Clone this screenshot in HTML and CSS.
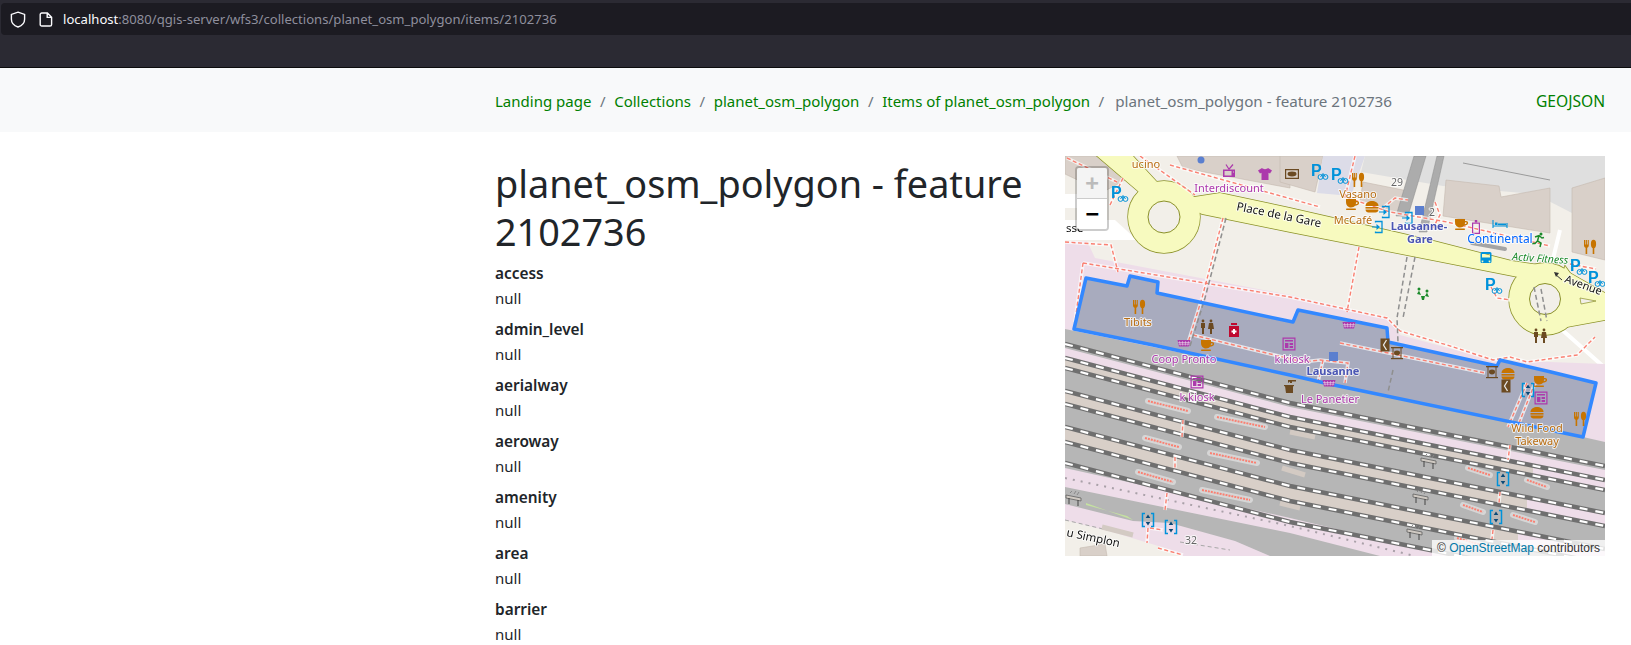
FILE: index.html
```html
<!doctype html>
<html lang="en">
<head>
    <meta charset="UTF-8">
    <title>planet_osm_polygon - feature 2102736</title>
    <link rel="stylesheet" href="styles.css">
</head>
<body>
<header class="browser">
    <div class="urlbar">
        <svg class="shield" width="16" height="17" viewBox="0 0 16 17"><path d="M8 1.2 14.6 3.4V8.2C14.6 12 11.6 14.8 8 16 4.4 14.8 1.4 12 1.4 8.2V3.4Z"/></svg>
        <svg class="pageicon" width="14" height="15" viewBox="0 0 14 15"><path d="M2.8 1H8.4L12.6 5.2V12.4A1.6 1.6 0 0 1 11 14H2.8A1.6 1.6 0 0 1 1.2 12.4V2.6A1.6 1.6 0 0 1 2.8 1ZM8.2 1V5.4H12.6"/></svg>
        <span class="url"><b>localhost</b>:8080/qgis-server/wfs3/collections/planet_osm_polygon/items/2102736</span>
    </div>
</header>

<nav class="crumbs">
    <ol>
        <li><a href="#">Landing page</a></li>
        <li><a href="#">Collections</a></li>
        <li><a href="#">planet_osm_polygon</a></li>
        <li><a href="#">Items of planet_osm_polygon</a></li>
        <li class="current">planet_osm_polygon - feature 2102736</li>
    </ol>
    <a class="format" href="#">GEOJSON</a>
</nav>

<main class="content">
    <section class="props">
        <h1>planet_osm_polygon - feature 2102736</h1>
        <dl>
            <dt>access</dt><dd>null</dd>
            <dt>admin_level</dt><dd>null</dd>
            <dt>aerialway</dt><dd>null</dd>
            <dt>aeroway</dt><dd>null</dd>
            <dt>amenity</dt><dd>null</dd>
            <dt>area</dt><dd>null</dd>
            <dt>barrier</dt><dd>null</dd>
        </dl>
    </section>

    <div class="map">
        <svg class="tiles" width="540" height="400" viewBox="0 0 540 400">
            <defs>
                <g id="i-fork"><path d="M-6-7v5.5c0 1 .8 2 1.6 2.2V7h1.6V.7C-2 .5-1.200-.5-1.200-1.500V-7h-1v4.500h-.7V-7h-1v4.500h-.7V-7z"/><ellipse cx="3.500" cy="-3" rx="2.600" ry="4.200"/><rect x="2.700" y="0" width="1.600" height="7"/></g>
                <g id="i-cup"><path d="M-6-5H4V-3C6.500-3.500 7.500-2 7-.5 6.500 1 5 1.500 3 1.800 2 3 1 3.500-1 3.500-4 3.500-6 1-6-2ZM4-1.600 3.800.3C5 0 5.800-.5 5.700-1.200 5.600-2 4.800-2 4-1.600Z"/><rect x="-6" y="4.500" width="10" height="1.500" rx=".7"/></g>
                <g id="i-burger"><path d="M-6.500-1C-6.500-4.500-3-6 0-6S6.500-4.500 6.500-1Z"/><rect x="-6.500" y="0" width="13" height="1.600"/><path d="M-6.500 2.600H6.500C6.500 4.500 5 5.500 3.500 5.500H-3.500C-5 5.500-6.500 4.500-6.500 2.600Z"/></g>
                <g id="i-tv"><path d="M-6-2.500H6V5H-6ZM-4.500-1V3.500H2.500V-1ZM4-.5h1v1H4Z" fill-rule="evenodd"/><path d="M-3-7.500 0-2.800 4-7.500" fill="none" stroke="currentColor" stroke-width="1.200"/></g>
                <g id="i-shirt"><path d="M-3-6-7-3.500-5-.5-3.500-1.300V6H3.500V-1.300L5-.5 7-3.500 3-6C2-4.500-2-4.500-3-6Z"/></g>
                <g id="i-money"><path d="M-7-5H7V5H-7ZM-5.800-3.800V3.800H5.800V-3.800Z" fill-rule="evenodd"/><ellipse cx="0" cy="0" rx="4.500" ry="2.400"/></g>
                <g id="i-bus"><path d="M-4-6H4A1.500 1.500 0 0 1 5.500-4.500V3.500A1.500 1.500 0 0 1 4 5H-4A1.500 1.500 0 0 1-5.500 3.500V-4.500A1.500 1.500 0 0 1-4-6ZM-4-4V-.5H4V-4ZM-3.500 2.500a.9.9 0 1 0 .01 0ZM3.500 2.500a.9.9 0 1 0 .01 0Z" fill-rule="evenodd"/></g>
                <g id="i-bike"><text class="pmark" x="-7" y="3">P</text><circle cx="2.500" cy="4" r="2.400" fill="none" stroke="currentColor" stroke-width="1"/><circle cx="7.500" cy="4" r="2.400" fill="none" stroke="currentColor" stroke-width="1"/><path d="M2.500 4 5 .5 7.500 4" fill="none" stroke="currentColor"/></g>
                <g id="i-lift"><path d="M-3-6.500H-5.500V6.500H-3M3-6.500H5.500V6.500H3" fill="none" stroke="currentColor" stroke-width="1.500"/><path d="M0-5.500 2.300-2H-2.300ZM0 5.500 2.300 2H-2.300Z" fill="#0a4a78"/></g>
                <g id="i-door"><path d="M-1.500-4.500V-5.500H5V5.500H-1.500V4.500" fill="none" stroke="currentColor" stroke-width="1.300"/><path d="M-5-.6H-.5V-3L3 0-.5 3V.6H-5Z"/></g>
                <g id="i-kiosk"><path d="M-6.500-6.500H6.500V6.500H-6.500ZM-5.300-5.300V5.300H5.300V-5.300Z" fill-rule="evenodd"/><path d="M-4-4H4V-2.500H-4ZM-4-1H-.6V4H-4ZM.6-1H4V1H.6ZM.6 2H4V4H.6Z"/></g>
                <g id="i-kbox"><rect x="-4.500" y="-6.500" width="9" height="13"/><path d="M1.500-5-1.500 0 1.500 5" fill="none" stroke="#e8e8e8" stroke-width="1.300"/></g>
                <g id="i-cmach"><rect x="-6" y="-6" width="12" height="1.300"/><rect x="-4.500" y="-5" width="1" height="11"/><rect x="3.500" y="-5" width="1" height="11"/><ellipse cx="0" cy="0" rx="3" ry="2.400"/><rect x="-6" y="5" width="12" height="1.200"/></g>
                <g id="i-canopy"><path d="M-8-2 7 1V4L-8 1Z" fill="#cfc9c2" stroke="#555" stroke-width=".7"/><path d="M-5 1V7M4 3V9" stroke="#444" stroke-width="1"/><path d="M-4-4-2-6M0-3 2-6M3-2 5-5" stroke="#888" stroke-width="1"/></g>
                <g id="i-basket"><path d="M-6.500-3H6.500L5 3.500H-5Z"/><path d="M-4.500-1.800-3.800 2.500M-1.500-1.800-1.300 2.500M1.500-1.800 1.300 2.500M4.500-1.800 3.800 2.500M-5.800-.5H5.800M-5.300 1.200H5.300" stroke="#e8d8ea" stroke-width=".6"/></g>
                <g id="i-wc"><circle cx="-4" cy="-6" r="1.400"/><path d="M-6-4H-2V1H-3V7H-5V1H-6Z"/><circle cx="4" cy="-6" r="1.400"/><path d="M2-4H6L7 2H5V7H3V2H1Z"/></g>
                <g id="i-pharm"><path d="M-3-7H3V-5H-3ZM-5-4H5V7H-5Z"/><path d="M-1 -1H1V.5H2.500V2.500H1V4H-1V2.500H-2.500V.5H-1Z" fill="#fff"/></g>
                <g id="i-runner"><circle cx="3" cy="-6" r="1.500"/><path d="M-3-3 1-4.500 4-2 6-2.500M1-4.500-.5 1 3 3 2 7M-.5 1-3 3.500H-6" fill="none" stroke="currentColor" stroke-width="1.500"/></g>
                <g id="i-seesaw"><circle cx="-4" cy="-5" r="1.500"/><circle cx="4" cy="-3" r="1.500"/><path d="M-6 0-4-3.500-2 1ZM2 2 4-1.500 6 3Z"/><path d="M-2 2H2L1 6H-1Z"/></g>
                <g id="i-bed"><path d="M-7-4V4M7-1V4M-7 2H7" fill="none" stroke="currentColor" stroke-width="1.100"/><path d="M-5-1.500H-2.500V1H-5ZM-2-.5H6V1H-2Z"/></g>
                <g id="i-phone"><path d="M-4-4.500H4V7H-4ZM-2.800-3.300V5.800H2.800V-3.300Z" fill-rule="evenodd"/><rect x="-1.200" y="-7" width="2.400" height="2.500"/></g>
                <g id="i-tap"><path d="M-2-7H6V-5.500H2V-4H0V-5.500L-2-4Z"/><path d="M-5-1H3V6H-4Z"/><rect x="-6" y="-2" width="10" height="1.200"/></g>

                <g id="roads">
                    <circle cx="99" cy="61" r="36"/>
                    <circle cx="480" cy="143" r="36"/>
                    <path d="M32 0H68L92 26 74 36Z"/>
                    <path d="M129 41 155 37 225 52 365 84 447 105 482 110V130L453 121 225 76 137 58 120 50Z"/>
                    <path d="M500 110 505 117 540 137V164L502 171 490 150Z"/>
                </g>

                <g id="feet">
                    <path d="M0 86 46 89 53 116M2 2 52 26M45 49 58 22M75 0 130 39M105 9 255 51M290 0 280 41 325 56 382 66 485 90"/>
                    <path d="M318 52 330 42 343 44M370 46 375 59 368 72M18 107 225 141 322 162 335 175 382 189 428 204 445 201 462 206 512 199 530 181M18 107 10 166"/>
                    <path d="M158 62 137 142 122 190M294 91 282 156M275 187 420 217M462 227 443 271M470 227 452 272M128 179 238 206 255 204 283 207 280 227M258 204 253 226"/>
                    <path d="M118 264 117 281M110 301 110 312M102 337 100 354M445 289 443 304M435 336 434 347M428 374 427 383M83 372 82 387M85 372 98 374M93 392 118 399M426 131 432 142 445 144M505 108 531 113"/>
                </g>
            </defs>

            <rect class="land" width="540" height="400"/>

            <!-- buildings, top of the map -->
            <path class="bld" d="M112 0H225V32L118 12Z"/>
            <path class="bld" d="M0 0H32L60 24 38 36 0 18Z"/>
            <path class="bld" d="M215 0H258L250 36 215 26Z"/>
            <path class="bld-lav" d="M258 0H300L286 40 252 37Z"/>
            <path class="bld-grey" d="M300 0H540V74L470 38 378 30 296 16Z"/>
            <path class="bld" d="M298 26 348 36 342 62 295 45Z"/>
            <path class="bld" d="M381 24 434 30 436 41 485 32V77L378 60Z"/>
            <path class="bld" d="M507 74V32L540 22V104L507 96Z"/>
            <path class="canopy" d="M349 0H361L343 60H331ZM372 0H379L362 76H354Z"/>
            <path class="canopy-line" d="M407 87 440 93"/>
            <path class="bld-grey-line" d="M398 7 485 24"/>
            <path class="white" d="M0 38H12V52H0ZM0 64H50L72 84H0Z"/>
            <path class="white-line" d="M487 107 495 74M495 172 540 212"/>

            <!-- station floor and tracks -->
            <path class="pink" d="M0 85H22L30 102 225 139 322 162 335 179 428 204 540 208V400H0Z"/>
            <path class="grey" d="M0 173 225 219 518 281 540 286V400H0Z"/>
            <path class="pink" d="M0 192 225 251 540 314V324L225 261 0 202Z"/>
            <path class="beige" d="M0 202 225 261 468 310V320L225 271 0 212Z"/>
            <path class="pink" d="M468 310 540 324V334L468 320Z"/>
            <path class="beige" d="M0 235 225 294 462 341V354L225 307 0 248Z"/>
            <path class="pink" d="M462 341 540 357V370L462 354Z"/>
            <path class="beige" d="M0 271 225 330 453 376V391L225 345 0 286Z"/>
            <path class="pink" d="M453 376 540 393V400H490L453 391Z"/>
            <path class="pink" d="M0 312 225 362 385 400H315L225 377 0 331Z"/>
            <path class="pink" d="M0 348 68 365 105 367 170 385 205 400H0Z"/>
            <path class="green" d="M21 347 68 364 62 360 21 349Z"/>
            <path class="land" d="M0 364 47 376 100 392 118 400H0Z"/>
            <path class="bld" d="M15 392 40 388 42 400H15Z"/>
            <path class="dots" d="M0 322 225 370 350 400"/>
            <path class="walk" d="M0 364 68 380M115 386 165 394"/>

            <g class="platforms">
                <path d="M83 245 123 255M152 261 200 271M80 282 114 291M145 297 192 307M73 316 108 326M137 334 185 344M403 312 425 319M462 324 482 331M398 349 418 356M448 359 470 366M392 382 420 390"/>
                <path class="plat-red" d="M83 245 123 255M152 261 200 271M80 282 114 291M145 297 192 307M73 316 108 326M137 334 185 344M403 312 425 319M462 324 482 331M398 349 418 356M448 359 470 366M392 382 420 390"/>
                <path class="plat-plain" d="M225 276 250 281M217 312 240 319M215 347 235 352M37 371 68 379"/>
            </g>

            <g class="rail-base">
                <path d="M0 188 225 247 540 310"/><path d="M0 202 225 261 540 324"/><path d="M0 212 225 271 540 334"/><path d="M0 235 225 294 540 357"/>
                <path d="M0 248 225 307 540 370"/><path d="M0 271 225 330 540 393"/><path d="M0 286 225 345 540 408"/><path d="M0 307 225 366 540 429"/>
            </g>
            <g class="rail-dash">
                <path d="M0 188 225 247 540 310"/><path d="M0 202 225 261 540 324"/><path d="M0 212 225 271 540 334"/><path d="M0 235 225 294 540 357"/>
                <path d="M0 248 225 307 540 370"/><path d="M0 271 225 330 540 393"/><path d="M0 286 225 345 540 408"/><path d="M0 307 225 366 540 429"/>
            </g>

            <!-- feature fill sits above the tile -->
            <path class="feature-fill" d="M9 173 21 122 62 130 65 120 93 126 92 137 228 166 233 154 322 172 323 186 432 210 435 204 486 216 531 227 518 281 264 228 225 219 88 189Z"/>

            <use class="road-case" href="#roads"/>
            <use class="road-fill" href="#roads"/>
            <circle class="hole" cx="99" cy="61" r="16"/>
            <circle class="hole" cx="480" cy="143" r="15.500"/>
            <path class="island" d="M515 142 531 145 516 148Z"/>

            <use class="foot-case" href="#feet"/>
            <use class="foot" href="#feet"/>
            <path class="rail-sub" d="M342 101 332 162 333 186M350 101 338 162M328 214 323 236M469 131 476 165M476 133 482 165M161 62 140 142 125 190"/>
            <path class="arrow" d="M490 118 497 124"/>
            <path class="arrowhead" d="M489 116 494 117 491 121Z"/>

            <path class="feature" d="M9 173 21 122 62 130 65 120 93 126 92 137 228 166 233 154 322 172 323 186 432 210 435 204 486 216 531 227 518 281 264 228 225 219 88 189Z"/>

            <g class="ic-amenity">
                <use href="#i-fork" x="74" y="151"/><use href="#i-fork" x="293" y="24"/><use href="#i-fork" x="525" y="91"/><use href="#i-fork" x="515" y="263"/>
                <use href="#i-cup" x="287" y="48"/><use href="#i-cup" x="396" y="68"/><use href="#i-cup" x="142" y="189"/><use href="#i-cup" x="475" y="225"/>
                <use href="#i-burger" x="307" y="51"/><use href="#i-burger" x="443" y="218"/><use href="#i-burger" x="472" y="257"/>
            </g>
            <g class="ic-shop">
                <use href="#i-tv" x="164" y="16"/><use href="#i-shirt" x="200" y="18"/><use href="#i-kiosk" x="132" y="226"/><use href="#i-kiosk" x="224" y="188"/><use href="#i-kiosk" x="476" y="242"/>
                <use href="#i-basket" x="119" y="187"/><use href="#i-basket" x="284" y="169"/><use href="#i-basket" x="264" y="227"/><use href="#i-phone" x="411" y="71"/>
            </g>
            <g class="ic-dark">
                <use href="#i-money" x="227" y="18"/><use href="#i-kbox" x="320" y="189"/><use href="#i-kbox" x="441" y="230"/><use href="#i-cmach" x="332" y="197"/><use href="#i-cmach" x="427" y="216"/><use href="#i-wc" x="142" y="171"/><use href="#i-wc" x="475" y="180"/><use href="#i-tap" x="225" y="231"/>
            </g>
            <g class="ic-blue">
                <use href="#i-bike" x="53" y="39"/><use href="#i-bike" x="253" y="17"/><use href="#i-bike" x="273" y="21"/><use href="#i-bike" x="427" y="131"/><use href="#i-bike" x="512" y="112"/><use href="#i-bike" x="530" y="124"/>
                <use href="#i-door" x="319" y="56"/><use href="#i-door" x="342" y="62"/><use href="#i-door" x="312" y="71"/><use href="#i-bus" x="421" y="102"/><use href="#i-bed" x="435" y="68"/>
                <use href="#i-lift" x="438" y="323"/><use href="#i-lift" x="431" y="361"/><use href="#i-lift" x="83" y="364"/><use href="#i-lift" x="106" y="371"/><use href="#i-lift" x="463" y="234"/>
            </g>
            <use class="ic-green" href="#i-runner" x="473" y="84"/>
            <use class="ic-green" href="#i-seesaw" x="358" y="138"/>
            <use class="ic-red" href="#i-pharm" x="169" y="174"/>
            <use href="#i-canopy" x="364" y="304"/><use href="#i-canopy" x="356" y="340"/><use href="#i-canopy" x="350" y="375"/><use href="#i-canopy" x="9" y="341"/>
            <rect class="stn" x="350" y="50" width="9" height="9"/>
            <rect class="stn" x="264" y="196" width="9" height="9"/>
            <circle class="stn" cx="136" cy="4" r="3.500"/>

            <text class="lb lb-road" transform="translate(171 54) rotate(11.500)">Place de la Gare</text>
            <text class="lb lb-road lb-ave" transform="translate(499 126) rotate(20)">Avenue</text>
            <text class="lb lb-road" x="1" y="76">sse</text>
            <text class="lb lb-road" transform="translate(1 380) rotate(12)">u Simplon</text>
            <text class="lb lb-shop lb-mid" x="164" y="36">Interdiscount</text>
            <text class="lb lb-shop lb-mid" x="119" y="207">Coop Pronto</text>
            <text class="lb lb-shop lb-mid" x="132" y="245">k kiosk</text>
            <text class="lb lb-shop lb-mid" x="227" y="207">k kiosk</text>
            <text class="lb lb-shop lb-mid" x="265" y="247">Le Panetier</text>
            <text class="lb lb-food lb-mid" x="73" y="170">Tibits</text>
            <text class="lb lb-food lb-mid" x="293" y="42">Vasano</text>
            <text class="lb lb-food lb-mid" x="288" y="68">McCafé</text>
            <text class="lb lb-food lb-mid" x="472" y="276">Wild Food</text>
            <text class="lb lb-food lb-mid" x="472" y="289">Takeway</text>
            <text class="lb lb-food lb-mid" x="81" y="12">ucino</text>
            <text class="lb lb-hotel lb-mid" x="435" y="87">Continental</text>
            <text class="lb lb-gym" transform="translate(447 104) rotate(4)">Activ Fitness</text>
            <text class="lb lb-stn lb-mid" x="354" y="74">Lausanne-</text>
            <text class="lb lb-stn lb-mid" x="355" y="87">Gare</text>
            <text class="lb lb-stn lb-mid" x="268" y="219">Lausanne</text>
            <text class="lb lb-num lb-mid" x="332" y="30">29</text>
            <text class="lb lb-num lb-mid" x="367" y="60">2</text>
            <text class="lb lb-num lb-mid" x="126" y="388">32</text>
        </svg>

        <div class="zoom">
            <a class="zoom-in" href="#">+</a>
            <a class="zoom-out" href="#">−</a>
        </div>
        <div class="attribution">© <a href="#">OpenStreetMap</a> contributors</div>
    </div>
</main>
</body>
</html>
```

FILE: styles.css
```css
* {
    margin: 0;
    padding: 0;
    box-sizing: border-box;
}
html, body {
    height: 645px;
    overflow: hidden;
}
body {
    background: #fff;
    color: #212529;
    font-family: "Noto Sans", "Open Sans", sans-serif;
    font-size: 15px;
    line-height: 24px;
}
a {
    text-decoration: none;
}

/* browser toolbar */
.browser {
    height: 68px;
    padding: 3px 0 0 1px;
    background: #2b2a33;
    border-bottom: 1px solid #0c0c0d;
}
.urlbar {
    height: 32px;
    display: flex;
    align-items: center;
    background: #1c1b22;
    border-radius: 4px 0 0 4px;
    padding-left: 9px;
}
.shield path, .pageicon path {
    fill: none;
    stroke: #fbfbfe;
    stroke-width: 1.4;
}
.pageicon {
    margin-left: 13px;
}
.url {
    margin-left: 10px;
    color: #8f8f9d;
    font-size: 13.1px;
}
.url b {
    color: #fbfbfe;
    font-weight: 400;
}

/* breadcrumb */
.crumbs {
    height: 64px;
    display: flex;
    align-items: center;
    justify-content: space-between;
    padding: 1px 26px 0 495px;
    background: #f8f9fa;
}
.crumbs ol {
    display: flex;
    list-style: none;
}
.crumbs a {
    color: #008000;
}
.crumbs li + li::before {
    content: "/";
    color: #6c757d;
    padding: 0 8.6px;
}
.crumbs li.current {
    color: #6c757d;
    font-size: 15.2px;
}
.crumbs li.current::before {
    padding-right: 11px;
}
.crumbs .format {
    font-size: 15.6px;
}

/* page body */
.content {
    display: flex;
    gap: 15px;
    padding: 24px 26px 0 495px;
}
.props {
    flex: 1;
    padding-top: 4px;
}
h1 {
    font-size: 37.8px;
    line-height: 48px;
    font-weight: 400;
    margin-bottom: 6px;
}
dt {
    font-weight: 600;
    font-size: 15.4px;
}
dd {
    margin-bottom: 8px;
}

/* map */
.map {
    position: relative;
    width: 540px;
    height: 400px;
    flex: none;
    overflow: hidden;
    background: #f2efe9;
}
.tiles {
    display: block;
    filter: blur(.35px);
}
.land { fill: #f2efe9; }
.bld { fill: #d9d0c9; stroke: #c4b9ae; stroke-width: .6; }
.bld-lav { fill: #dcdce8; }
.bld-grey { fill: #dfdfdf; }
.bld-grey-line { fill: none; stroke: #9a9a9a; }
.canopy { fill: #acacac; stroke: #8c8c8c; stroke-width: .5; }
.canopy-line { fill: none; stroke: #a4a4a4; stroke-width: 4; stroke-linecap: round; }
.white { fill: #fff; }
.white-line { fill: none; stroke: #fff; stroke-width: 4; }
.pink { fill: #eedde9; }
.grey { fill: #b6b6b6; }
.beige { fill: #d8cfc8; }
.green { fill: #c5e2a0; }
.dots { fill: none; stroke: #a9a0a8; stroke-width: 2; stroke-dasharray: 2 6; }
.walk { fill: none; stroke: #a8a8a8; stroke-width: 1; stroke-dasharray: 4 3; }

.platforms path { fill: none; stroke: #d6d6d6; stroke-width: 6; stroke-linecap: round; }
.platforms .plat-red { stroke: #fa8072; stroke-width: 2; stroke-dasharray: 2 1; stroke-linecap: butt; }
.platforms .plat-plain { stroke: #d3cac3; stroke-width: 5; stroke-linecap: butt; }

.rail-base path { fill: none; stroke: #6f6f6f; stroke-width: 4.5; }
.rail-dash path { fill: none; stroke: #fff; stroke-width: 2.2; stroke-dasharray: 8 8; }
.rail-sub { fill: none; stroke: #8f8f8f; stroke-width: 1.500; stroke-dasharray: 5 3; }

.road-case { fill: #8b9128; stroke: #8b9128; stroke-width: 1.400; }
.road-fill { fill: #f7fabf; }
.hole { fill: #f2efe9; stroke: #8b9128; stroke-width: 1; }
.island { fill: #f2efe9; stroke: #8b9128; stroke-width: .7; }
.foot-case { fill: none; stroke: #fff; stroke-width: 3.500; opacity: .7; }
.foot { fill: none; stroke: #fa8072; stroke-width: 1.400; stroke-dasharray: 4 2.500; }
.arrow { fill: none; stroke: #333; stroke-width: 1; }
.arrowhead { fill: #333; }

.feature-fill { fill: #a8abbe; }
.feature { fill: none; stroke: #3388ff; stroke-width: 3.500; stroke-linejoin: round; }

.ic-amenity { color: #c77400; fill: #c77400; }
.ic-shop { color: #ac39ac; fill: #ac39ac; }
.ic-dark { color: #6b4a22; fill: #6b4a22; }
.ic-blue { color: #0092da; fill: #0092da; }
.ic-green { color: #1b8a2a; fill: #1b8a2a; }
.ic-red { fill: #bf0a30; }
.pmark { font-family: "Liberation Sans", sans-serif; font-size: 16px; font-weight: 700; }
.stn { fill: #5b7fcf; }

.lb {
    font-family: "Noto Sans", sans-serif;
    font-size: 11px;
    paint-order: stroke;
    stroke: rgba(255, 255, 255, .75);
    stroke-width: 2px;
    stroke-linejoin: round;
}
.lb-mid { text-anchor: middle; }
.lb-road { fill: #111; font-size: 11.500px; }
.lb-ave { font-size: 11px; }
.lb-shop { fill: #ac39ac; }
.lb-food { fill: #b86d12; }
.lb-hotel { fill: #0067ff; font-size: 12px; }
.lb-gym { fill: #1b8a2a; font-style: italic; font-size: 10.500px; }
.lb-stn { fill: #4a55b4; font-weight: 700; }
.lb-num { fill: #666; font-size: 10.500px; }

.zoom {
    position: absolute;
    left: 10px;
    top: 10px;
    width: 34px;
    border: 2px solid rgba(0, 0, 0, .2);
    border-radius: 4px;
    background-clip: padding-box;
}
.zoom a {
    display: block;
    height: 30px;
    background: #fff;
    color: #000;
    font: 700 22px/30px "DejaVu Sans Mono", "Liberation Mono", monospace;
    text-align: center;
}
.zoom .zoom-in {
    height: 31px;
    background: #f4f4f4;
    color: #bbb;
    border-bottom: 1px solid #ccc;
    border-radius: 2px 2px 0 0;
}
.zoom .zoom-out {
    border-radius: 0 0 2px 2px;
}
.attribution {
    position: absolute;
    right: 0;
    bottom: 0;
    padding: 0 5px;
    background: rgba(255, 255, 255, .8);
    color: #333;
    font: 12px/16px "Liberation Sans", Arial, sans-serif;
}
.attribution a {
    color: #0078a8;
}
```
